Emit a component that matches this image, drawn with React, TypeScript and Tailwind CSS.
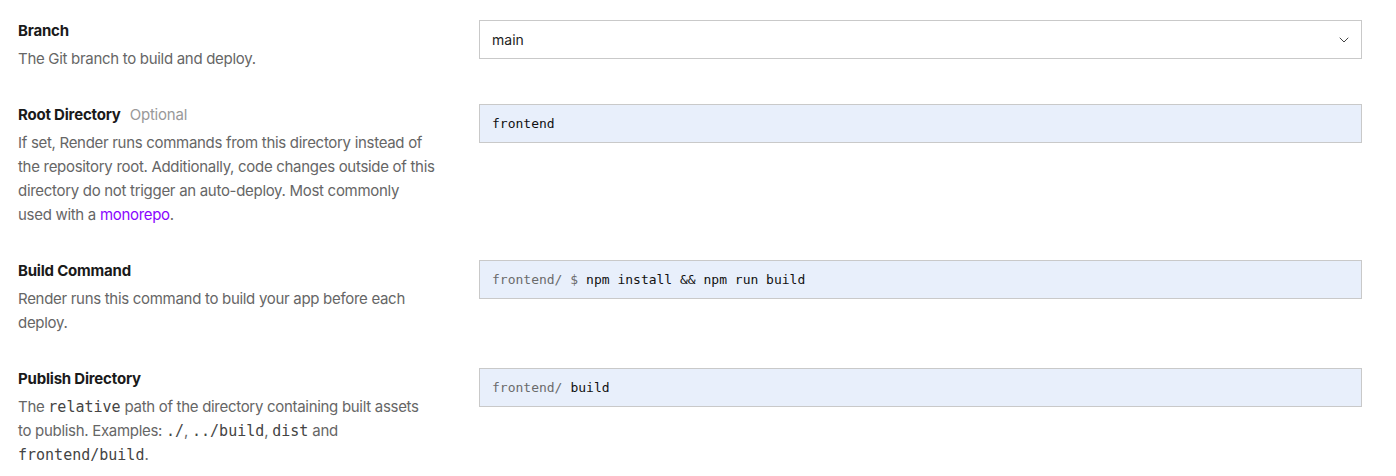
import { ChevronDown } from "lucide-react"
import type { ReactNode } from "react"

const sans = { fontFamily: "Inter, 'Noto Sans', sans-serif" }

function Code({ children }: { children: ReactNode }) {
  return <code className="font-['DejaVu_Sans_Mono',monospace] text-[15px] tracking-normal text-[#444]">{children}</code>
}

interface FieldProps {
  title: string
  optional?: boolean
  children: ReactNode
  control: ReactNode
}

function Field({ title, optional, children, control }: FieldProps) {
  return (
    <div className="grid grid-cols-[419px_1fr] gap-[42px]">
      <div>
        <div className="text-[15px] font-bold leading-6 tracking-[-0.2px] text-[#1a1a1a]">
          {title}
          {optional && <span className="ml-[9px] font-normal text-[#999]">Optional</span>}
        </div>
        <p className="mt-1 text-[15px] leading-6 tracking-[-0.3px] text-[#666]">{children}</p>
      </div>
      <div className="pt-[1px]">{control}</div>
    </div>
  )
}

function MonoInput({ prefix, value }: { prefix?: string; value: string }) {
  return (
    <div className="flex h-[39px] items-center border border-[#c9c9c9] bg-[#e8effb] px-3 font-['DejaVu_Sans_Mono',monospace] text-[13px] text-[#111]">
      {prefix && <span className="mr-[8px] whitespace-pre text-[#6b6b6b]">{prefix}</span>}
      <span className="whitespace-pre">{value}</span>
    </div>
  )
}

export default function App() {
  return (
    <div className="flex min-h-screen flex-col gap-8 bg-white pb-8 pl-[18px] pr-[34px] pt-[19px]" style={sans}>
      <Field
        title="Branch"
        control={
          <div className="flex h-[39px] items-center justify-between border border-[#c9c9c9] bg-white pl-3 pr-[9px] text-[14px] text-[#222]">
            <span>main</span>
            <ChevronDown size={16} strokeWidth={1.5} className="text-[#444]" />
          </div>
        }
      >
        The Git branch to build and deploy.
      </Field>

      <Field title="Root Directory" optional control={<MonoInput value="frontend" />}>
        If set, Render runs commands from this directory instead of the repository root. Additionally, code changes
        outside of this directory do not trigger an auto-deploy. Most commonly used&nbsp;with a{" "}
        <a href="#" className="text-[#8a05ff]">
          monorepo
        </a>
        .
      </Field>

      <Field title="Build Command" control={<MonoInput prefix="frontend/ $" value="npm install && npm run build" />}>
        Render runs this command to build your app before each deploy.
      </Field>

      <Field title="Publish Directory" control={<MonoInput prefix="frontend/" value="build" />}>
        The <Code>relative</Code> path of the directory containing built assets to&nbsp;publish. Examples:{" "}
        <Code>./</Code>, <Code>../build</Code>, <Code>dist</Code> and <Code>frontend/build</Code>.
      </Field>
    </div>
  )
}
